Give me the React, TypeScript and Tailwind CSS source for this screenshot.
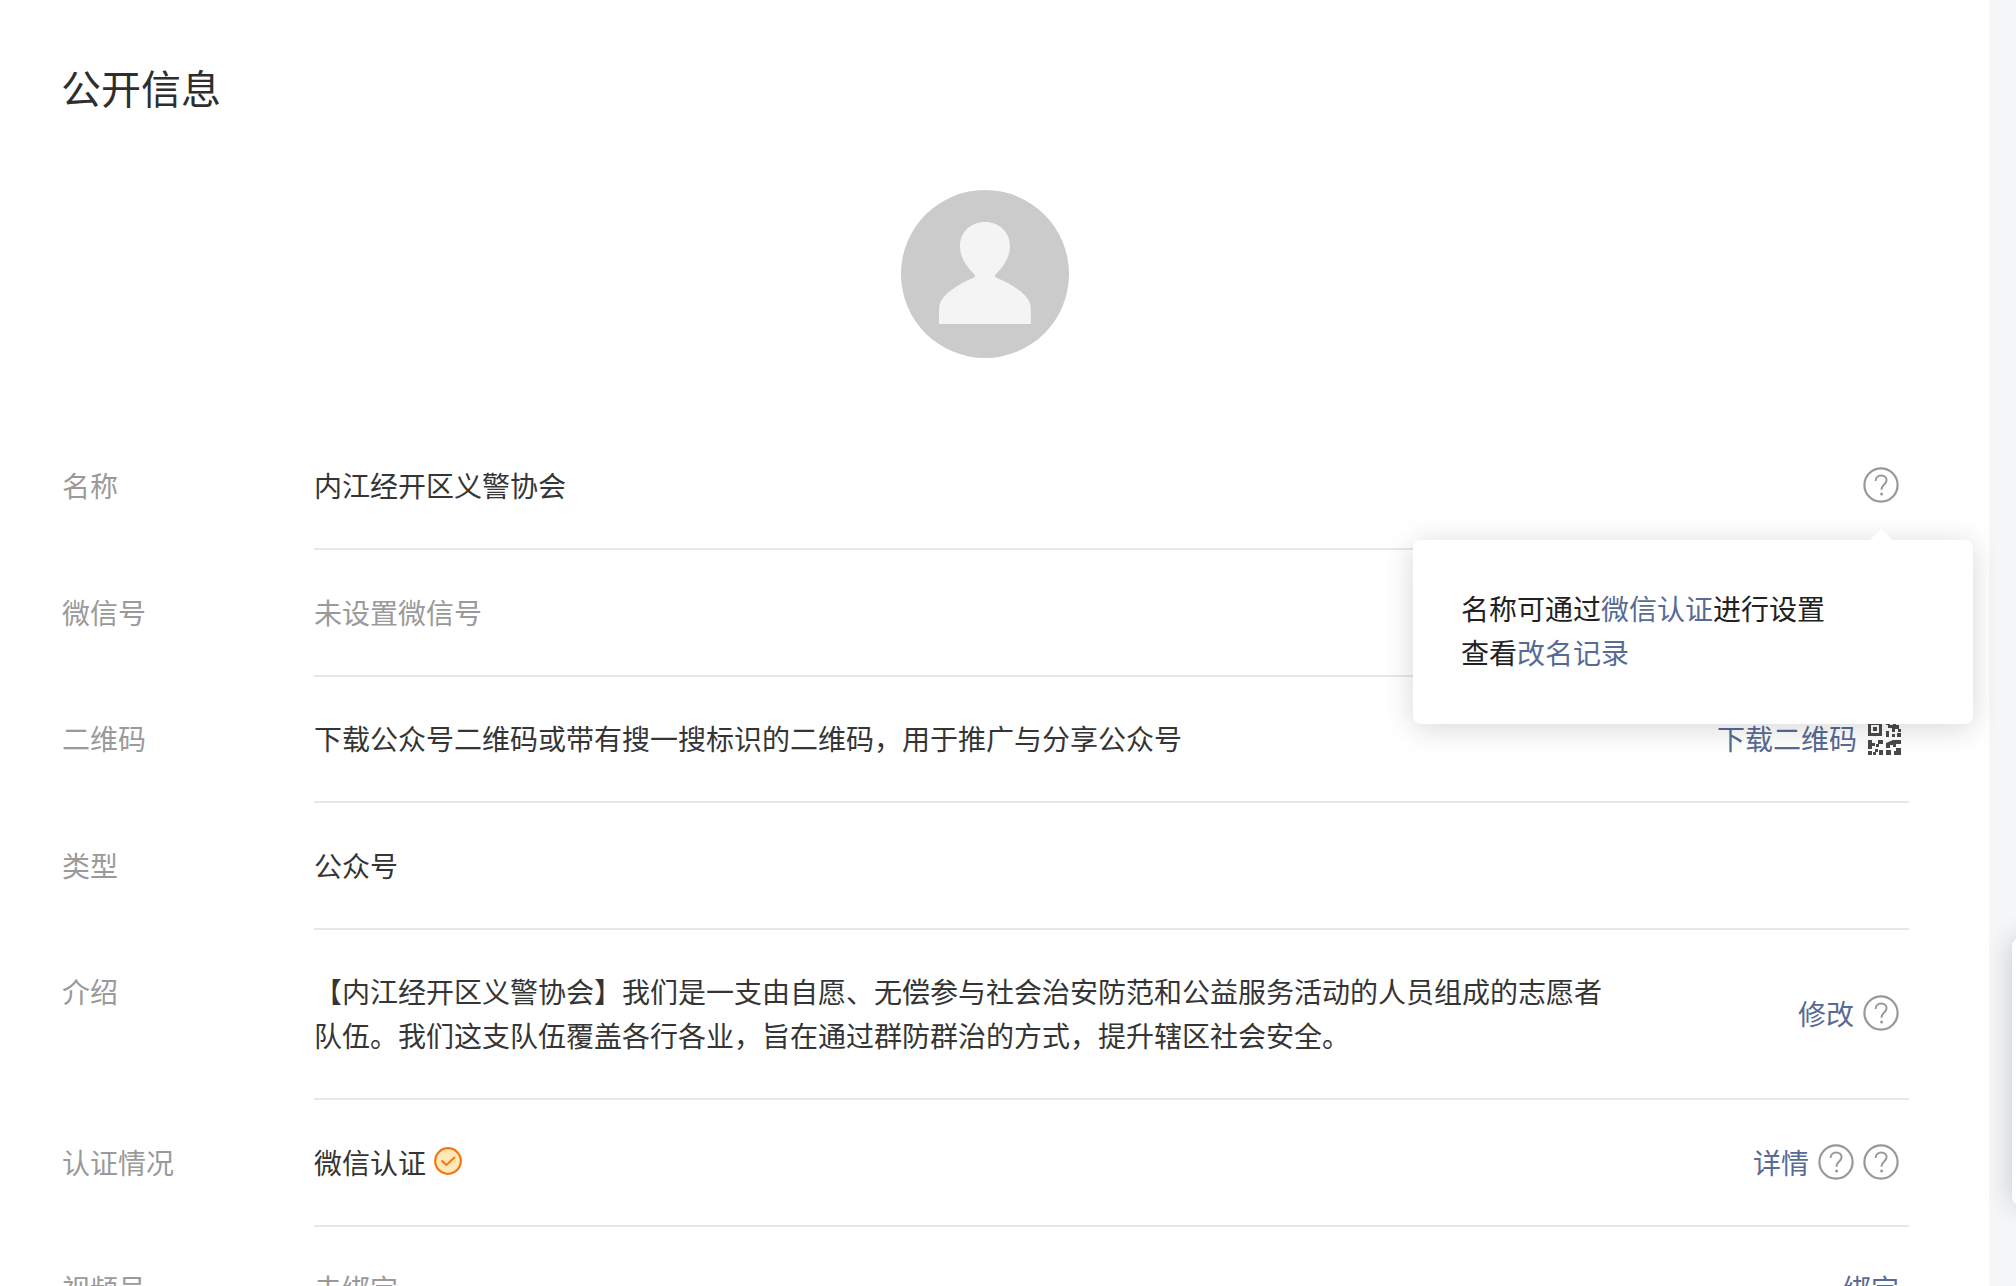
function Help() {
  return (
    <svg width="36" height="36" viewBox="0 0 36 36" className="shrink-0">
      <circle cx="18" cy="18" r="16.6" fill="none" stroke="#999" strokeWidth="2.2" />
      <path d="M12.600 14c0-3.400 2.500-5.600 5.600-5.600s5.400 2 5.400 4.700c0 4.200-5 4.400-5 8.700v1" fill="none" stroke="#999" strokeWidth="2" />
      <circle cx="18.600" cy="27" r="1.500" fill="#999" />
    </svg>
  );
}

function QrIcon() {
  return (
    <svg width="33" height="33" viewBox="0 0 33 33" className="-mr-[2px] ml-[2px] shrink-0" fill="#4a4a4a">
      <path fillRule="evenodd" d="M0 0h14v14H0zM3 3v8h8V3z" />
      <path d="M5 5h4v4H5z" />
      <path d="M18 0h4v3h-4zM25 0h3v3h3v4h2v3h-3V7h-3v3h-3V6h-4V3h5zM18 9h3v6h-3zM29 11h4v4h-4zM24 12h3v3h-3z" />
      <path d="M0 18h4v3h3v3H4v3H0zM10 18h5v4h-4v3H8v-3h2zM0 29h4v4H0zM7 27h3v3H7zM11 28h4v5h-4zM5 30h3v3H5z" />
      <path d="M18 21l7-3h8v4h-5v3h-3v-2h-3v3h-4zM18 28h5v5h-5zM28 26h5v7h-7v-4h2z" />
    </svg>
  );
}

function Verified() {
  return (
    <svg width="28" height="28" viewBox="0 0 28 28" className="ml-[8px] -translate-y-px shrink-0">
      <circle cx="14" cy="14" r="12.800" fill="#ffe9b8" stroke="#f9730f" strokeWidth="2.200" />
      <path d="M7.500 13.500l5 4.500 8.500-8" fill="none" stroke="#f9730f" strokeWidth="2" />
    </svg>
  );
}

function Avatar() {
  return (
    <div className="flex h-[168px] w-[168px] items-center justify-center rounded-full bg-[#cbcbcb]">
      <svg width="168" height="168" viewBox="0 0 168 168">
        <path
          d="M84 32c14 0 25 10 25 24 0 11-6 20-14 28-2 2-1 3 1 4 14 6 27 14 32 23 2 4 2 6 2 23H38c0-17 0-19 2-23 5-9 18-17 32-23 2-1 3-2 1-4-8-8-14-17-14-28 0-14 11-24 25-24z"
          fill="#f4f4f4"
        />
      </svg>
    </div>
  );
}

function Row({
  label,
  action,
  children,
  last
}: {
  label: string;
  action?: React.ReactNode;
  children: React.ReactNode;
  last?: boolean;
}) {
  return (
    <div className="flex text-[28px] leading-[44px]">
      <div className="w-[252px] shrink-0 pt-[39.500px] text-[#9a9a9a]">{label}</div>
      <div className={`flex min-w-0 flex-1 items-center justify-between pt-[39.500px] pb-[41px] ${last ? "" : "border-b-2 border-[#e4e8eb]"}`}>
        <div className="min-w-0 flex-1">{children}</div>
        <div className="flex items-center gap-[9px] pr-[10px] text-[#576b95]">{action}</div>
      </div>
    </div>
  );
}

export default function App() {
  return (
    <div
      className="relative h-screen overflow-hidden bg-[#f6f7f9] text-[#353535]"
      style={{ fontFamily: '"Noto Sans CJK SC", "Liberation Sans", sans-serif' }}
    >
      <div className="h-full w-[1989px] bg-white pl-[62px] pr-[80px]">
        <h2 className="pt-[60px] -ml-px text-[40px] leading-[54px] font-normal text-[#2e2e2e]">公开信息</h2>
        <div className="mt-[76px] mb-[65.500px] flex justify-center pr-[2px]">
          <Avatar />
        </div>

        <Row label="名称" action={<Help />}>
          内江经开区义警协会
        </Row>
        <Row label="微信号">
          <span className="text-[#9a9a9a]">未设置微信号</span>
        </Row>
        <Row
          label="二维码"
          action={
            <>
              <span>下载二维码</span>
              <QrIcon />
            </>
          }
        >
          下载公众号二维码或带有搜一搜标识的二维码，用于推广与分享公众号
        </Row>
        <Row label="类型">公众号</Row>
        <Row
          label="介绍"
          action={
            <>
              <span>修改</span>
              <Help />
            </>
          }
        >
          <p className="w-[1290px]">
            【内江经开区义警协会】我们是一支由自愿、无偿参与社会治安防范和公益服务活动的人员组成的志愿者队伍。我们这支队伍覆盖各行各业，旨在通过群防群治的方式，提升辖区社会安全。
          </p>
        </Row>
        <Row
          label="认证情况"
          action={
            <>
              <span>详情</span>
              <Help />
              <Help />
            </>
          }
        >
          <div className="flex items-center">
            微信认证
            <Verified />
          </div>
        </Row>
        <Row label="视频号" action={<span>绑定</span>} last>
          <span className="text-[#9a9a9a]">未绑定</span>
        </Row>
      </div>

      {/* tooltip under the first help icon */}
      <div className="absolute top-[540px] left-[1413px] w-[560px] rounded-[8px] bg-white px-[48px] pt-[46px] pb-[50px] text-[28px] leading-[44px] text-[#222] shadow-[0_4px_30px_rgba(0,0,0,0.16)]">
        <div className="absolute -top-[7px] left-[458px] h-[20px] w-[20px] rotate-45 rounded-[2px] bg-white" />
        <div className="relative">
          名称可通过<span className="text-[#576b95]">微信认证</span>进行设置
        </div>
        <div className="relative">
          查看<span className="text-[#576b95]">改名记录</span>
        </div>
      </div>

      {/* side drawer edge */}
      <div className="absolute top-[938px] left-[2012px] h-[267px] w-[40px] rounded-[8px] bg-white shadow-[0_0_30px_rgba(0,0,0,0.2)]" />
    </div>
  );
}
